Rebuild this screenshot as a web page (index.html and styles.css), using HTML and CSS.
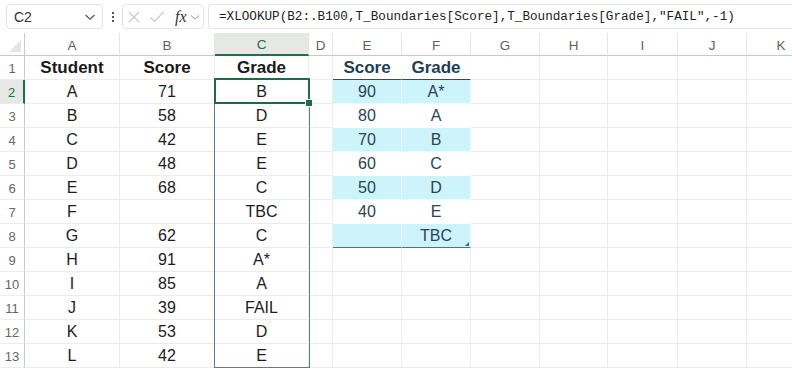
FILE: index.html
```html
<!DOCTYPE html>
<html>
	<head>
		<title>Grade lookup</title>
		<link rel="stylesheet" href="styles.css">
	</head>
	<body>
		<div class="toolbar">
			<div class="name-box">
				<span>C2</span>
				<svg class="chev" width="12" height="8" viewBox="0 0 12 8"><path d="M1.5 2 L6 6.2 L10.5 2" fill="none" stroke="#555" stroke-width="1.2"/></svg>
			</div>
			<div class="dots"><i></i><i></i><i></i></div>
			<div class="fx-group">
				<svg width="14" height="14" viewBox="0 0 14 14"><path d="M2 2 L12 12 M12 2 L2 12" stroke="#c9c9c9" stroke-width="1.1"/></svg>
				<svg width="16" height="14" viewBox="0 0 16 14"><path d="M1.5 7.5 L5.5 11.5 L14.5 2" fill="none" stroke="#c9c9c9" stroke-width="1.1"/></svg>
				<span class="fx">fx</span>
				<svg width="10" height="8" viewBox="0 0 10 8"><path d="M1 2.5 L5 6 L9 2.5" fill="none" stroke="#9a9a9a" stroke-width="1"/></svg>
			</div>
			<div class="formula">=XLOOKUP(B2:.B100,T_Boundaries[Score],T_Boundaries[Grade],"FAIL",-1)</div>
		</div>

		<div class="sheet">
			<div class="row col-heads">
				<div class="corner"></div>
				<div>A</div><div>B</div><div class="sel">C</div><div>D</div><div>E</div><div>F</div>
				<div>G</div><div>H</div><div>I</div><div>J</div><div>K</div>
			</div>

			<div class="row">
				<div class="rh">1</div>
				<div class="b">Student</div><div class="b">Score</div><div class="b">Grade</div><div></div>
				<div class="th">Score</div><div class="th">Grade</div>
				<div></div><div></div><div></div><div></div><div></div>
			</div>
			<div class="row">
				<div class="rh sel">2</div>
				<div>A</div><div>71</div><div>B</div><div></div>
				<div class="td band">90</div><div class="td band">A*</div>
				<div></div><div></div><div></div><div></div><div></div>
			</div>
			<div class="row">
				<div class="rh">3</div>
				<div>B</div><div>58</div><div>D</div><div></div>
				<div class="td">80</div><div class="td">A</div>
				<div></div><div></div><div></div><div></div><div></div>
			</div>
			<div class="row">
				<div class="rh">4</div>
				<div>C</div><div>42</div><div>E</div><div></div>
				<div class="td band">70</div><div class="td band">B</div>
				<div></div><div></div><div></div><div></div><div></div>
			</div>
			<div class="row">
				<div class="rh">5</div>
				<div>D</div><div>48</div><div>E</div><div></div>
				<div class="td">60</div><div class="td">C</div>
				<div></div><div></div><div></div><div></div><div></div>
			</div>
			<div class="row">
				<div class="rh">6</div>
				<div>E</div><div>68</div><div>C</div><div></div>
				<div class="td band">50</div><div class="td band">D</div>
				<div></div><div></div><div></div><div></div><div></div>
			</div>
			<div class="row">
				<div class="rh">7</div>
				<div>F</div><div></div><div>TBC</div><div></div>
				<div class="td">40</div><div class="td">E</div>
				<div></div><div></div><div></div><div></div><div></div>
			</div>
			<div class="row">
				<div class="rh">8</div>
				<div>G</div><div>62</div><div>C</div><div></div>
				<div class="td band last"></div><div class="td band last">TBC<span class="resize"></span></div>
				<div></div><div></div><div></div><div></div><div></div>
			</div>
			<div class="row">
				<div class="rh">9</div>
				<div>H</div><div>91</div><div>A*</div><div></div>
				<div></div><div></div>
				<div></div><div></div><div></div><div></div><div></div>
			</div>
			<div class="row">
				<div class="rh">10</div>
				<div>I</div><div>85</div><div>A</div><div></div>
				<div></div><div></div>
				<div></div><div></div><div></div><div></div><div></div>
			</div>
			<div class="row">
				<div class="rh">11</div>
				<div>J</div><div>39</div><div>FAIL</div><div></div>
				<div></div><div></div>
				<div></div><div></div><div></div><div></div><div></div>
			</div>
			<div class="row">
				<div class="rh">12</div>
				<div>K</div><div>53</div><div>D</div><div></div>
				<div></div><div></div>
				<div></div><div></div><div></div><div></div><div></div>
			</div>
			<div class="row">
				<div class="rh">13</div>
				<div>L</div><div>42</div><div>E</div><div></div>
				<div></div><div></div>
				<div></div><div></div><div></div><div></div><div></div>
			</div>

			<!-- spill range + active cell -->
			<div class="spill"></div>
			<div class="active"><span class="handle"></span></div>
		</div>
	</body>
</html>
```

FILE: styles.css
```css
body {
	margin: 0;
	background-color: #fff;
	font-family: "Liberation Sans", Arial, sans-serif;
	color: #1c1c1c;
	overflow: hidden;
	width: 792px;
	height: 370px;
}

/* formula bar */

.toolbar {
	display: flex;
	align-items: center;
	height: 33px;
	padding-left: 6px;
	box-sizing: border-box;
}

.name-box {
	display: flex;
	align-items: center;
	justify-content: space-between;
	width: 97px;
	height: 25px;
	box-sizing: border-box;
	border: 1px solid #e3e3e3;
	border-radius: 4px;
	padding: 0 6px 0 7px;
	font-size: 14px;
	color: #333;
}

.dots {
	display: flex;
	flex-direction: column;
	gap: 2px;
	margin: 0 8px 0 9px;
}

.dots i {
	display: block;
	width: 2px;
	height: 2px;
	background-color: #555;
}

.fx-group {
	display: flex;
	align-items: center;
	gap: 8px;
	width: 82px;
	height: 25px;
	box-sizing: border-box;
	border: 1px solid #e3e3e3;
	border-radius: 4px;
	padding-left: 4px;
}

.fx {
	font-family: "Liberation Serif", serif;
	font-style: italic;
	font-size: 16px;
	color: #333;
	margin-left: 2px;
	margin-right: -5px;
}

.formula {
	flex: 1;
	height: 25px;
	line-height: 23px;
	box-sizing: border-box;
	border: 1px solid #e3e3e3;
	border-right: none;
	border-radius: 4px 0 0 4px;
	margin-left: 4px;
	padding-left: 10px;
	font-family: "Liberation Mono", monospace;
	font-size: 12.65px;
	color: #222;
	white-space: nowrap;
}

/* sheet grid */

.sheet {
	position: relative;
}

.row {
	display: grid;
	grid-template-columns: 25px 95px 95px 94px 24px 69px 69px 69px 68px 70px 69px 69px;
	height: 24px;
}

.row > div {
	box-sizing: border-box;
	border-right: 1px solid #ececec;
	border-bottom: 1px solid #ececec;
	display: flex;
	align-items: center;
	justify-content: center;
	font-size: 16px;
	white-space: nowrap;
}

.col-heads {
	height: 23px;
}

.col-heads > div {
	font-size: 13.5px;
	color: #5f5f5f;
	border-bottom: 1px solid #c8c8c8;
	border-right-color: #e4e4e4;
	padding-top: 2px;
}

.col-heads .corner {
	position: relative;
	border-right-color: #c8c8c8;
}

.corner::after {
	content: "";
	position: absolute;
	right: 3px;
	bottom: 3px;
	border-left: 12px solid transparent;
	border-bottom: 12px solid #e4e4e4;
}

.col-heads .sel {
	background-color: #e6e8e6;
	color: #1e7145;
	border-bottom: 2px solid #1e7145;
}

.row > .rh {
	font-size: 13px;
	color: #666;
	border-right-color: #c8c8c8;
	padding-top: 1px;
}

.row > .rh.sel {
	background-color: #e6e8e6;
	color: #1e7145;
	border-right: 2px solid #1e7145;
}

.b {
	font-weight: bold;
	font-size: 17px !important;
	color: #1a1a1a;
}

/* boundaries table */

.row > .th {
	font-weight: bold;
	font-size: 17px;
	color: #1d3e55;
	border-bottom: 1px solid #2d4d66;
	border-right-color: #fff;
}

.row > .td {
	color: #2a4356;
	border-right-color: #fff;
	border-bottom-color: #fff;
}

.row > .band {
	background-color: #cdf4fb;
	border-right-color: #e7fafd;
	border-bottom-color: #e7fafd;
}

.row > .last {
	position: relative;
	border-bottom: 1px solid #4a6e9e;
}

.resize {
	position: absolute;
	right: 1px;
	bottom: 1px;
	border-left: 4px solid transparent;
	border-bottom: 4px solid #3a62a8;
}

/* selection */

.spill {
	position: absolute;
	left: 214px;
	top: 46px;
	width: 96px;
	height: 289px;
	box-sizing: border-box;
	border: 1px solid #5a78a6;
}

.active {
	position: absolute;
	left: 214px;
	top: 45px;
	width: 96px;
	height: 26px;
	box-sizing: border-box;
	border: 2px solid #1e6c41;
}

.handle {
	position: absolute;
	right: -5px;
	bottom: -5px;
	width: 6px;
	height: 6px;
	background-color: #1e6c41;
	border: 1px solid #fff;
}
```
